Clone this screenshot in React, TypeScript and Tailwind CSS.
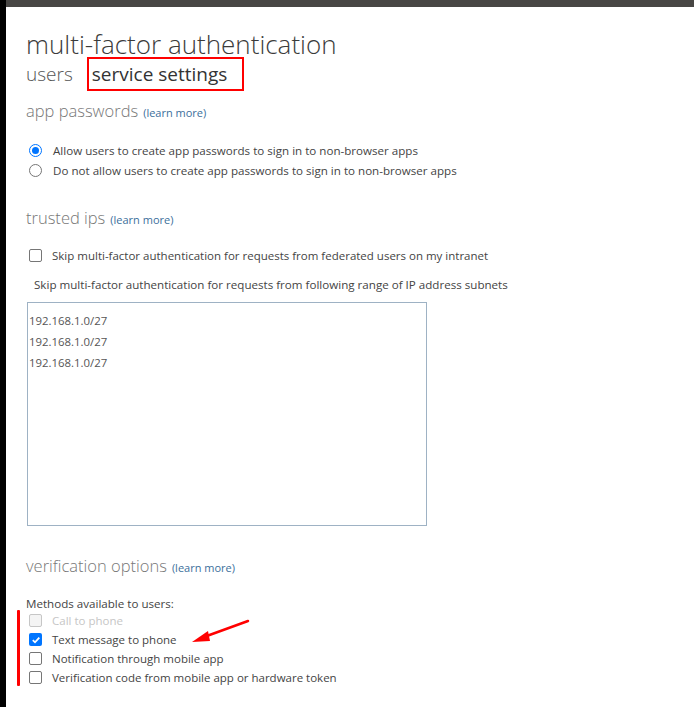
import React from "react";

function Radio({ checked }: { checked?: boolean }) {
  return (
    <span
      className={`inline-flex h-[13px] w-[13px] shrink-0 items-center justify-center rounded-full border ${
        checked ? "border-[#0075ff]" : "border-[#767676]"
      } bg-white`}
    >
      {checked && <span className="h-[7px] w-[7px] rounded-full bg-[#0075ff]" />}
    </span>
  );
}

function Check({ checked, disabled }: { checked?: boolean; disabled?: boolean }) {
  if (checked) {
    return (
      <span className="inline-flex h-[13px] w-[13px] shrink-0 items-center justify-center rounded-[2px] bg-[#0075ff]">
        <svg width="10" height="10" viewBox="0 0 10 10">
          <path d="M1.8 5.2 L4 7.3 L8.3 2.6" fill="none" stroke="white" strokeWidth="1.8" />
        </svg>
      </span>
    );
  }
  return (
    <span
      className={`inline-block h-[13px] w-[13px] shrink-0 rounded-[2px] border ${
        disabled ? "border-[#c6c6c6] bg-[#f4f4f4]" : "border-[#767676] bg-white"
      }`}
    />
  );
}

function SectionTitle({ children }: { children: React.ReactNode }) {
  return (
    <div className="flex items-baseline gap-[5px] leading-[26px] text-[#777]">
      <span className="text-[16.5px] font-light">{children}</span>
      <span className="text-[11px] text-[#3c6f9c]">(learn more)</span>
    </div>
  );
}

export default function App() {
  const ips = ["192.168.1.0/27", "192.168.1.0/27", "192.168.1.0/27"];
  return (
    <div
      className="flex h-[707px] w-[694px] overflow-hidden bg-white text-[#444]"
      style={{ fontFamily: '"Segoe UI", "Open Sans", "Noto Sans", sans-serif' }}
    >
      <div className="w-[6px] shrink-0 bg-black" />
      <div className="flex flex-1 flex-col">
        <div className="h-[7px] bg-[#484644]" />
        <div className="relative flex flex-col pl-[20px]">
          <h1 className="mt-[20px] text-[26px] font-light leading-[34px] text-[#3b3b3b]">
            multi-factor authentication
          </h1>
          <div className="mt-[-4px] flex items-center text-[19px] leading-[26px]">
            <span className="font-light text-[#555]">users</span>
            <span className="ml-[14px] border-2 border-[#ff0000] py-[2px] pl-[3px] pr-[15px] text-[#333]">
              service settings
            </span>
          </div>

          <div className="mt-[7px]">
            <SectionTitle>app passwords</SectionTitle>
          </div>
          <div className="mt-[18px] flex flex-col gap-[7px] pl-[3px] text-[11.6px] leading-[13px]">
            <label className="flex items-center gap-[11px]">
              <Radio checked />
              <span>Allow users to create app passwords to sign in to non-browser apps</span>
            </label>
            <label className="flex items-center gap-[11px]">
              <Radio />
              <span>Do not allow users to create app passwords to sign in to non-browser apps</span>
            </label>
          </div>

          <div className="mt-[28px]">
            <SectionTitle>trusted ips</SectionTitle>
          </div>
          <label className="mt-[16px] flex items-center gap-[10px] pl-[3px] text-[11.5px] leading-[13px]">
            <Check />
            <span>Skip multi-factor authentication for requests from federated users on my intranet</span>
          </label>
          <div className="mt-[16px] pl-[8px] text-[11.6px] leading-[14px]">
            Skip multi-factor authentication for requests from following range of IP address subnets
          </div>
          <div className="mt-[10px] ml-[1px] h-[224px] w-[400px] border border-[#9eb2c4] pt-[7px] pl-[1px] text-[11.4px] leading-[21px] text-[#555]">
            {ips.map((ip, i) => (
              <div key={i}>{ip}</div>
            ))}
          </div>

          <div className="mt-[27px]">
            <SectionTitle>verification options</SectionTitle>
          </div>
          <div className="mt-[16px] text-[11.6px] leading-[14px]">Methods available to users:</div>
          <div className="mt-[3px] flex flex-col gap-[6px] pl-[3px] text-[11.5px] leading-[13px]">
            <label className="flex items-center gap-[10px] text-[#c6c6c6]">
              <Check disabled />
              <span>Call to phone</span>
            </label>
            <label className="flex items-center gap-[10px]">
              <Check checked />
              <span>Text message to phone</span>
            </label>
            <label className="flex items-center gap-[10px]">
              <Check />
              <span>Notification through mobile app</span>
            </label>
            <label className="flex items-center gap-[10px]">
              <Check />
              <span>Verification code from mobile app or hardware token</span>
            </label>
          </div>

          <div className="absolute left-[11px] top-[603px] h-[76px] w-[3px] rounded-[1px] bg-[#ff0000]" />
          <svg className="absolute left-[180px] top-[610px]" width="70" height="35" viewBox="0 0 70 35">
            <line x1="62" y1="4" x2="18" y2="20" stroke="#ff0000" strokeWidth="2.5" strokeLinecap="round" />
            <polygon points="6,25 22,14 24,24" fill="#ff0000" />
          </svg>
        </div>
      </div>
    </div>
  );
}
